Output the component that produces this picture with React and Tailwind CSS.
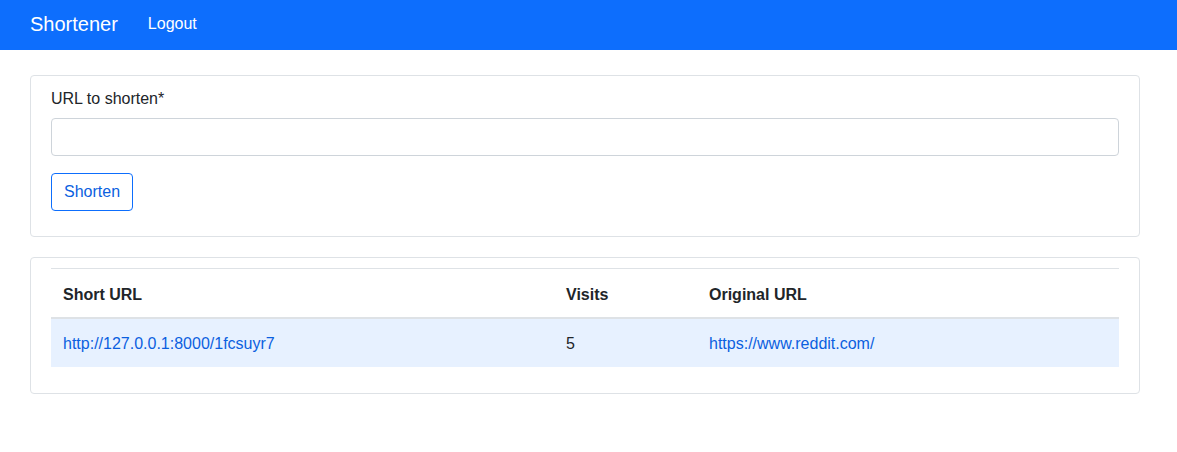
import React from 'react';

export default function App() {
  return (
    <div className="min-h-[452px] bg-white text-[16px] leading-6 text-[#212529] [font-family:'Liberation_Sans',Arial,sans-serif]">
      <nav className="h-[50px] bg-[#0d6efd] flex items-center px-[30px] pb-[2px]">
        <a className="text-[20px] text-white mr-[30px]">Shortener</a>
        <a className="text-white">Logout</a>
      </nav>

      <main className="w-[1110px] ml-[30px] pt-[25px]">
        <div className="border border-[#dee2e6] rounded px-5 pt-[11px] pb-[25px]">
          <label className="block mb-[7px]">URL to shorten*</label>
          <input type="text" className="block w-full h-[38px] border border-[#ced4da] rounded px-3 outline-none" />
          <button className="mt-[17px] h-[38px] px-3 border border-[#0d6efd] rounded text-[#0b5fe0] bg-white">
            Shorten
          </button>
        </div>

        <div className="mt-5 border border-[#dee2e6] rounded px-5 pt-[10px] pb-[26px]">
          <table className="w-full border-collapse text-left">
            <thead>
              <tr className="border-t border-[#dee2e6] border-b-2 border-b-[#dee2e6]">
                <th className="w-[503px] px-3 pt-[14px] pb-[10px] font-bold">Short URL</th>
                <th className="w-[143px] px-3 pt-[14px] pb-[10px] font-bold">Visits</th>
                <th className="px-3 pt-[14px] pb-[10px] font-bold">Original URL</th>
              </tr>
            </thead>
            <tbody>
              <tr className="bg-[#e7f1ff]">
                <td className="px-3 pt-[13px] pb-[11px]"><a className="text-[#0b5fe0]">http://127.0.0.1:8000/1fcsuyr7</a></td>
                <td className="px-3 pt-[13px] pb-[11px]">5</td>
                <td className="px-3 pt-[13px] pb-[11px]"><a className="text-[#0b5fe0]">https://www.reddit.com/</a></td>
              </tr>
            </tbody>
          </table>
        </div>
      </main>
    </div>
  );
}
